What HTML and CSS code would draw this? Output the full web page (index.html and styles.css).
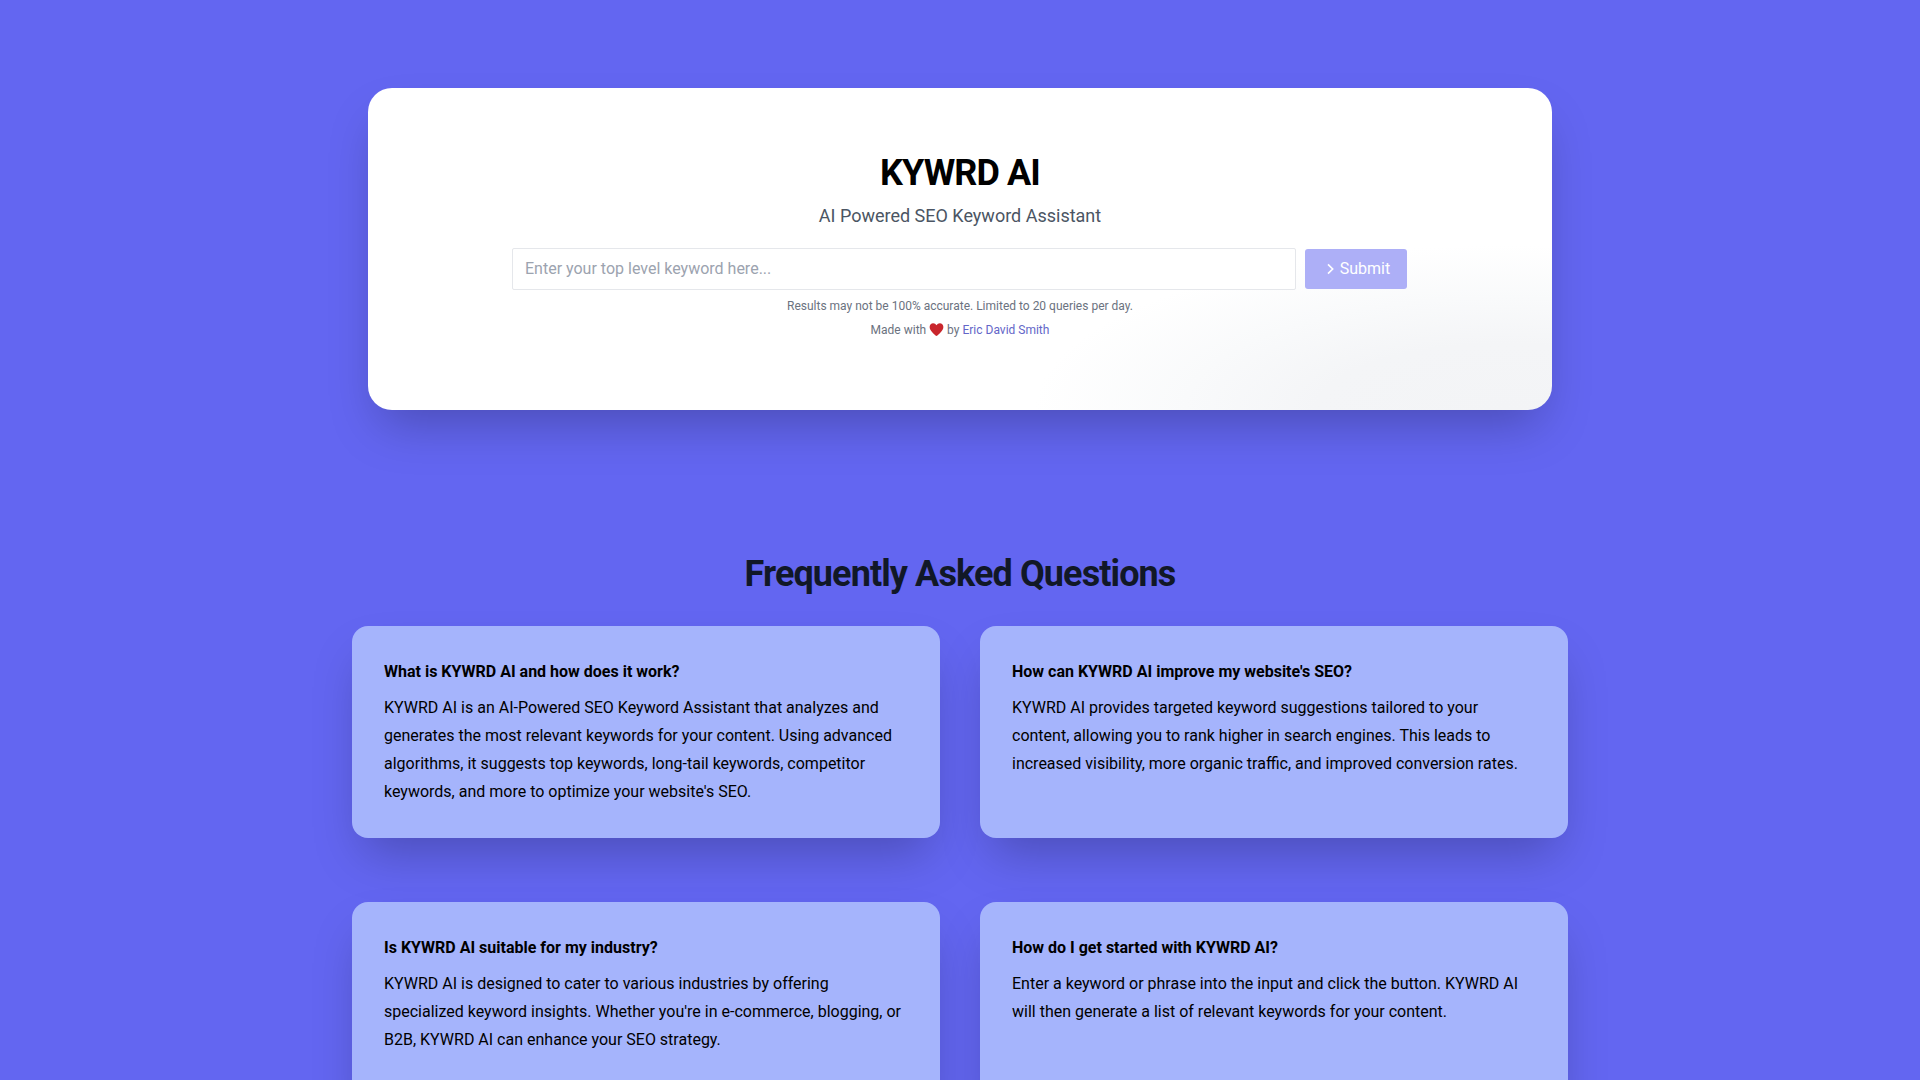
FILE: index.html
```html
<!DOCTYPE html>
<html lang="en">
<head>
<meta charset="utf-8">
<title>KYWRD AI</title>
<link rel="stylesheet" href="styles.css">
</head>
<body>
<main class="page">
  <section class="hero">
    <h1 class="hero-title">KYWRD AI</h1>
    <p class="hero-sub">AI Powered SEO Keyword Assistant</p>
    <form class="search">
      <input class="search-input" type="text" placeholder="Enter your top level keyword here...">
      <button class="search-btn" type="button" disabled>
        <svg class="search-icon" viewBox="0 0 24 24" aria-hidden="true"><path d="M9 5l7 7-7 7"/></svg>
        <span>Submit</span>
      </button>
    </form>
    <p class="note">Results may not be 100% accurate. Limited to 20 queries per day.</p>
    <p class="note note-credit">Made with
      <svg class="heart" viewBox="0 0 24 24" aria-hidden="true"><path d="M12 22.5C8.5 19.4 1 14 1 7.8 1 4.3 3.6 2 6.6 2c2.3 0 4.2 1.2 5.4 3.2C13.2 3.2 15.1 2 17.4 2 20.4 2 23 4.3 23 7.8c0 6.2-7.5 11.6-11 14.7z"/></svg>
      by <a class="note-link" href="#">Eric David Smith</a></p>
  </section>

  <section class="faq">
    <h2 class="faq-title">Frequently Asked Questions</h2>
    <div class="faq-grid">
      <article class="faq-card">
        <h3 class="faq-q">What is KYWRD AI and how does it work?</h3>
        <p class="faq-a">KYWRD AI is an AI-Powered SEO Keyword Assistant that analyzes and generates the most relevant keywords for your content. Using advanced algorithms, it suggests top keywords, long-tail keywords, competitor keywords, and more to optimize your website's SEO.</p>
      </article>
      <article class="faq-card">
        <h3 class="faq-q">How can KYWRD AI improve my website's SEO?</h3>
        <p class="faq-a">KYWRD AI provides targeted keyword suggestions tailored to your content, allowing you to rank higher in search engines. This leads to increased visibility, more organic traffic, and improved conversion rates.</p>
      </article>
      <article class="faq-card">
        <h3 class="faq-q">Is KYWRD AI suitable for my industry?</h3>
        <p class="faq-a">KYWRD AI is designed to cater to various industries by offering specialized keyword insights. Whether you're in e-commerce, blogging, or B2B, KYWRD AI can enhance your SEO strategy.</p>
      </article>
      <article class="faq-card">
        <h3 class="faq-q">How do I get started with KYWRD AI?</h3>
        <p class="faq-a">Enter a keyword or phrase into the input and click the button. KYWRD AI will then generate a list of relevant keywords for your content.</p>
      </article>
    </div>
  </section>
</main>
</body>
</html>
```

FILE: styles.css
```css
* { box-sizing: border-box; }
html, body { margin: 0; height: 100%; overflow: hidden; }
body {
  background: #6366f1;
  font-family: Roboto, "Liberation Sans", sans-serif;
  color: #000;
}
.page {
  width: 1216px;
  margin: 0 auto;
  padding-top: 88px;
}
.hero {
  margin: 0 16px;
  height: 322px;
  padding-top: 65px;
  border-radius: 24px;
  background: radial-gradient(ellipse 470px 165px at 96% 100%, #f3f4f6 0%, #f4f5f7 40%, #f9fafb 68%, #ffffff 100%), #fff;
  box-shadow: 0 25px 50px -12px rgba(0, 0, 0, 0.25);
  text-align: center;
}
.hero-title {
  margin: 0;
  font-size: 36px;
  line-height: 40px;
  font-weight: 700;
  letter-spacing: -0.025em;
}
.hero-sub {
  margin: 9px 0 18px;
  font-size: 18px;
  line-height: 28px;
  color: #4b5563;
}
.search {
  display: flex;
  align-items: center;
  gap: 9px;
  width: 895px;
  margin: 0 0 0 144px;
}
.search-input {
  flex: 1;
  height: 42px;
  padding: 0 12px 2px;
  border: 1px solid #e5e7eb;
  border-radius: 2px;
  background: #fff;
  font: 16px/24px Roboto, sans-serif;
  color: #111827;
}
.search-input::placeholder { color: #9ca3af; opacity: 1; }
.search-btn {
  display: flex;
  align-items: center;
  justify-content: center;
  gap: 2px;
  width: 102px;
  height: 40px;
  border: 0;
  border-radius: 3px;
  background: #adaff7;
  color: #fff;
  font: 16px/24px Roboto, sans-serif;
}
.search-icon {
  width: 16px;
  height: 16px;
  fill: none;
  stroke: #fff;
  stroke-width: 2.5;
}
.note {
  margin: 8px 0 0;
  font-size: 12px;
  line-height: 16px;
  color: #6b7280;
}
.note-credit { display: block; }
.heart {
  width: 15px;
  height: 15px;
  vertical-align: -3px;
  fill: #c9262c;
}
.note-link { color: #6366c8; text-decoration: none; }
.faq { margin-top: 144px; }
.faq-title {
  margin: 0 0 32px;
  font-size: 36px;
  line-height: 40px;
  font-weight: 700;
  letter-spacing: -0.025em;
  text-align: center;
  color: #111827;
}
.faq-grid {
  display: grid;
  grid-template-columns: 1fr 1fr;
  column-gap: 40px;
  row-gap: 64px;
}
.faq-card {
  padding: 32px;
  border-radius: 16px;
  background: #a5b4fc;
  box-shadow: 0 25px 50px -12px rgba(0, 0, 0, 0.25);
  height: 212px;
}
.faq-q {
  margin: 0 0 8px;
  font-size: 16px;
  line-height: 28px;
  font-weight: 700;
}
.faq-a {
  margin: 0;
  font-size: 16px;
  line-height: 28px;
}
```
